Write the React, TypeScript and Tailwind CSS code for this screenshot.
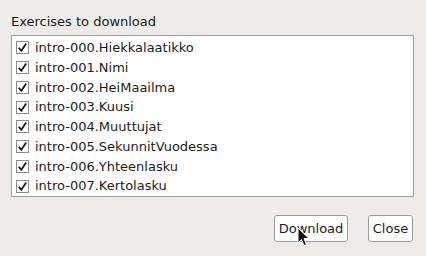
const EXERCISES = [
  'intro-000.Hiekkalaatikko',
  'intro-001.Nimi',
  'intro-002.HeiMaailma',
  'intro-003.Kuusi',
  'intro-004.Muuttujat',
  'intro-005.SekunnitVuodessa',
  'intro-006.Yhteenlasku',
  'intro-007.Kertolasku',
];

function CheckBox() {
  return (
    <span className="flex h-[13px] w-[13px] shrink-0 items-center justify-center border border-[#8a8a8a] bg-white">
      <svg width="11" height="11" viewBox="0 0 11 11">
        <path d="M1.8 5.8 L4.3 8.8 L9.2 1.6" fill="none" stroke="#1a1a1a" strokeWidth="1.8" />
      </svg>
    </span>
  );
}

function Cursor() {
  return (
    <svg className="absolute left-[297px] top-[227px]" width="14" height="20" viewBox="0 0 14 20">
      <path d="M1 1 L1 16 L4.5 12.5 L7 18.5 L9.5 17.5 L7 11.5 L12 11.5 Z" fill="#111" stroke="#fff" strokeWidth="1" />
    </svg>
  );
}

export default function App() {
  return (
    <div className="relative h-[256px] w-[426px] overflow-hidden bg-[#edeceb] font-['DejaVu_Sans',sans-serif] text-[13px] text-[#1c1c1c]">
      <div className="px-[11px] pt-[12px]">
        <div className="h-[19px] leading-[19px]">Exercises to download</div>
        <div className="mt-[4px] flex h-[162px] w-[403px] flex-col border border-[#a0a09e] bg-white pt-[2px]">
          {EXERCISES.map((name) => (
            <div key={name} className="flex h-[20px] items-center gap-[6px] pl-[4px]">
              <CheckBox />
              <span>{name}</span>
            </div>
          ))}
        </div>
      </div>
      <div className="mt-[18px] flex justify-end gap-[20px] pr-[13px]">
        <button className="h-[27px] w-[74px] rounded-[3px] border border-[#9a9a98] bg-white leading-none">Download</button>
        <button className="h-[27px] w-[45px] rounded-[3px] border border-[#9a9a98] bg-white leading-none">Close</button>
      </div>
      <Cursor />
    </div>
  );
}
